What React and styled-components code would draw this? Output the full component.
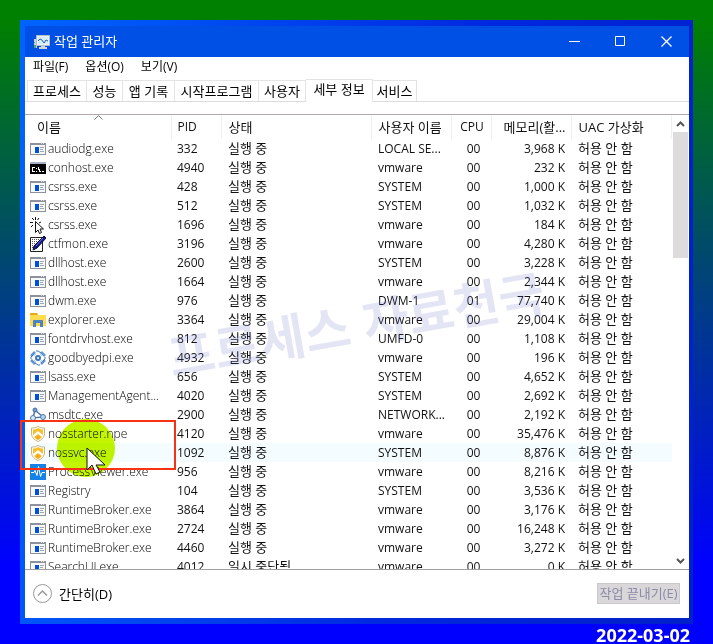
import React from "react";
import styled, { createGlobalStyle } from "styled-components";

const GlobalStyle = createGlobalStyle`
  * {
    box-sizing: border-box;
  }

  body {
    margin: 0;
    font-family: "Open Sans", "Noto Sans CJK KR", sans-serif;
    font-size: 12px;
    color: #000;
  }

  button,
  input {
    font: inherit;
  }
`;

const Page = styled.div`
  display: flex;
  flex-direction: column;
  height: 100vh;
  min-height: 320px;
  padding: 20px 20px 0;
  background: linear-gradient(#008000 3%, #0000ff 88%);
`;

const Desktop = styled.div`
  display: flex;
  flex: 1;
  min-height: 0;
  padding: 6px 4px 6px 5px;
  background: linear-gradient(100deg, #0064ff, #0028e0 60%, #0020c8);
`;

const Window = styled.main`
  display: flex;
  flex: 1;
  flex-direction: column;
  min-width: 0;
  background: #fff;
`;

const TitleBar = styled.header`
  display: flex;
  align-items: center;
  height: 31px;
  padding-left: 8px;
  background: #0050e6;
  color: #fff;
`;

const Title = styled.h1`
  flex: 1;
  margin: 0 0 0 4px;
  padding-bottom: 2px;
  font-size: 13px;
  font-weight: 400;
`;

const WindowButton = styled.button`
  display: grid;
  place-items: center;
  width: 46px;
  height: 31px;
  padding: 0;
  border: 0;
  background: none;
  color: #fff;
`;

const MenuBar = styled.nav`
  display: flex;
  gap: 17px;
  height: 20px;
  padding-left: 8px;
`;

const MenuButton = styled.button`
  padding: 0;
  border: 0;
  background: none;
  color: #000;
  line-height: 20px;
`;

const Tabs = styled.div`
  display: flex;
  align-items: flex-end;
  height: 25px;
  padding-left: 2px;
  border-bottom: 1px solid #dcdcdc;
`;

const Tab = styled.button`
  width: ${({ width }) => width}px;
  height: ${({ $selected }) => ($selected ? 23 : 21)}px;
  margin-bottom: ${({ $selected }) => ($selected ? -1 : 0)}px;
  padding: 0 0 ${({ $selected }) => ($selected ? 3 : 0)}px;
  border: 1px solid #e4e4e4;
  border-bottom: 0;
  border-left-width: ${({ $first }) => ($first ? 1 : 0)}px;
  background: #fff;
  color: #000;
  font-size: 13px;
  line-height: 19px;
  white-space: nowrap;
`;

const ListArea = styled.section`
  position: relative;
  display: flex;
  flex: 1;
  min-height: 0;
  margin-top: 12px;
  border-top: 1px solid #b4aaaa;
  border-bottom: 1px solid #a0a0a0;
`;

const TableClip = styled.div`
  flex: 1;
  min-width: 0;
  overflow: hidden;
`;

const Table = styled.table`
  width: 100%;
  table-layout: fixed;
  border-collapse: collapse;
  color: #111;
`;

const HeadCell = styled.th`
  height: 24px;
  padding: 0 5px 0 ${({ $indent }) => $indent || 7}px;
  border-right: 1px solid #f0f0f0;
  overflow: hidden;
  font-size: ${({ $korean }) => ($korean ? 13 : 12)}px;
  font-weight: 400;
  line-height: 24px;
  text-align: ${({ $align }) => $align || "left"};
  vertical-align: top;
  white-space: nowrap;
`;

const Row = styled.tr`
  height: 19px;
  background: ${({ $hovered }) => ($hovered ? "#f4fcff" : "none")};
`;

const Cell = styled.td`
  height: 19px;
  padding: 0 ${({ $align }) => ($align === "right" ? 6 : 2)}px 0 ${({ $indent }) => $indent || 7}px;
  overflow: hidden;
  font-size: ${({ $korean }) => ($korean ? 13 : 12)}px;
  line-height: 19px;
  text-align: ${({ $align }) => $align || "left"};
  white-space: nowrap;
`;

const NameBox = styled.div`
  display: flex;
  align-items: center;
  gap: 2px;
  height: 19px;
  color: #000;
  font-weight: 350;

  svg {
    flex-shrink: 0;
  }
`;

const SortMark = styled.svg`
  position: absolute;
  top: 0;
  left: 69px;
`;

const ScrollBar = styled.div`
  display: flex;
  flex-direction: column;
  align-items: center;
  width: 17px;
  padding: 0 1px;
`;

const ScrollButton = styled.button`
  display: grid;
  place-items: center;
  width: 15px;
  height: 17px;
  padding: 0;
  border: 0;
  background: none;
`;

const ScrollTrack = styled.div`
  flex: 1;
  width: 15px;
`;

const ScrollThumb = styled.div`
  height: 30%;
  background: #dedbdc;
`;

const Watermark = styled.div`
  position: absolute;
  top: 180px;
  left: 141px;
  color: #5a64c8;
  font-size: 50px;
  font-weight: 700;
  line-height: 60px;
  opacity: 0.16;
  pointer-events: none;
  transform: rotate(-10deg);
  white-space: nowrap;
`;

const Spot = styled.div`
  position: absolute;
  top: 304px;
  left: 32px;
  width: 58px;
  height: 58px;
  border-radius: 50%;
  background: #c3f500;
  mix-blend-mode: multiply;
  pointer-events: none;
`;

const RedBox = styled.div`
  position: absolute;
  top: 305px;
  left: -5px;
  width: 156px;
  height: 50px;
  border: 2px solid #fa3214;
  pointer-events: none;
`;

const Pointer = styled.svg`
  position: absolute;
  top: 332px;
  left: 61px;
  pointer-events: none;
`;

const Footer = styled.footer`
  display: flex;
  align-items: center;
  justify-content: space-between;
  height: 48px;
  padding: 0 9px 2px 8px;
`;

const FoldButton = styled.button`
  display: flex;
  align-items: center;
  gap: 7px;
  padding: 0;
  border: 0;
  background: none;
  color: #000;
  font-size: 13px;
`;

const EndButton = styled.button`
  width: 83px;
  height: 21px;
  padding: 0;
  border: 1px solid #c8c8cd;
  background: #d9d7da;
  color: #8c8ca5;
  font-size: 13px;
  line-height: 19px;
  white-space: nowrap;
`;

const DateText = styled.time`
  align-self: flex-end;
  height: 20px;
  margin-right: 3px;
  color: #fff;
  font-family: "Noto Sans", sans-serif;
  font-size: 18px;
  font-weight: 700;
  line-height: 22px;
`;

const TaskLogo = () => (
  <svg width="17" height="16" viewBox="0 0 17 16">
    <path d="M1 5h3v9H1z" fill="#c8d2d8" />
    <path d="M1 8h1v1H1zM1 11h2v3H1z" fill="#4aa860" />
    <path d="M3.500 1.500h13v10h-13z" fill="#e8f2f8" stroke="#b4c0c8" />
    <path d="M5 3h10v7H5z" fill="#d4ecfa" />
    <path d="M5 7l2-2 2 1 2 3 2-3 2 1" fill="none" stroke="#1e64aa" />
    <path d="M8 12h4v1h2v2H6v-2h2z" fill="#ccd6dc" />
  </svg>
);

const AppIcon = () => (
  <svg width="16" height="14" viewBox="0 0 16 14" shapeRendering="crispEdges">
    <path d="M0 1h16v12H0z" fill="#8c919b" />
    <path d="M1 3h14v9H1z" fill="#f6f8fa" />
    <path d="M11 1h1v1h-1zM13 1h1v1h-1z" fill="#dde" />
    <path d="M5 5h4v6H5z" fill="#0050dc" />
    <path d="M10 5h4v1h-4zM10 7h3v1h-3zM10 9h4v1h-4z" fill="#a0a5b0" />
  </svg>
);

const ConsoleIcon = () => (
  <svg width="16" height="14" viewBox="0 0 16 14" shapeRendering="crispEdges">
    <path d="M0 1h16v12H0z" fill="#000" />
    <path d="M0 1h16v2H0z" fill="#a5b0c8" />
    <path d="M2 6h3v1H3v3h2v1H2zM6 7h1v1H6zM6 10h1v1H6zM8 6h1v2h1v2h1v1H9V9H8zM12 10h2v1h-2z" fill="#fff" />
  </svg>
);

const ClickIcon = () => (
  <svg width="16" height="18" viewBox="0 0 16 18">
    <path d="M5.500 5.500v11l2.500-2.500 1.500 3.500 2-1-1.500-3.500h3.500z" fill="#fff" stroke="#111" />
    <path d="M5.500 1v3M2 2l2 2M0 6.500h3M1 11l2-2M9 2L7.500 4M11 6l-2 1" stroke="#111" fill="none" />
  </svg>
);

const PenIcon = () => (
  <svg width="16" height="16" viewBox="0 0 16 16">
    <path d="M.5 1.500h12v14H.5z" fill="#fff" stroke="#222" />
    <path d="M2 3.500h9M2 5.500h7M2 7.500h6M2 9.500h4M2 11.500h3" stroke="#555" strokeDasharray="1 1" />
    <path d="M14 0l2 2-9 10-4 2 1-4z" fill="#14148c" stroke="#0a0a32" />
    <path d="M13 2L6 10" stroke="#6478e6" />
  </svg>
);

const FolderIcon = () => (
  <svg width="16" height="16" viewBox="0 0 16 16">
    <path d="M0 1h7l1 2h8v11H0z" fill="#fcdc50" />
    <path d="M0 1h7l1 2H0z" fill="#e6aa14" />
    <path d="M3 15V9q0-1 1-1h8q1 0 1 1v6h-3v-4H6v4z" fill="#4b82c8" />
  </svg>
);

const GearIcon = () => (
  <svg width="16" height="16" viewBox="0 0 16 16" fill="none">
    <circle cx="8" cy="8" r="2" stroke="#3c78be" strokeWidth="2" />
    <path d="M1 6l4-4M11 2l4 4M15 10l-4 4M5 14L1 10" stroke="#5f96d2" strokeWidth="2.500" />
    <path d="M6 1l2-0 3 2M15 7v2l-2 2M10 15H8l-3-2M1 9V7l2-2" stroke="#3c78be" />
    <path d="M6 4L4 6M10 4l2 2M12 10l-2 2M4 10l2 2" stroke="#b9d2ee" />
  </svg>
);

const NodesIcon = () => (
  <svg width="16" height="16" viewBox="0 0 16 16">
    <path d="M5 3L3 11l10-1zM5 3l8 7" fill="none" stroke="#5078a8" strokeWidth="1.500" />
    <circle cx="5" cy="3" r="2" fill="#6ea0dc" stroke="#466ea0" />
    <circle cx="3" cy="11" r="2.500" fill="#dce8fa" stroke="#5078aa" />
    <circle cx="13" cy="10" r="2.500" fill="#b4d2f5" stroke="#5078aa" />
  </svg>
);

const ShieldIcon = () => (
  <svg width="16" height="16" viewBox="0 0 16 16">
    <path d="M8 .5q3 2 6.500 1.500v6q-.5 5-6.500 7.500Q2 13 1.500 8V2Q5 2.500 8 .5z" fill="#fff" stroke="#c8b482" />
    <path d="M8 2q2 1.500 5 1.500V8q-.5 4-5 6-4.500-2-5-6V3.500Q6 3.500 8 2z" fill="#fabe28" />
    <path d="M3 9l5-4 5 4-1 2-4-3-4 3z" fill="#fff" />
    <path d="M5 11l3-2 3 2-3 3z" fill="#f5aa1e" />
  </svg>
);

const PulseIcon = () => (
  <svg width="16" height="16" viewBox="0 0 16 16">
    <path d="M0 0h16v16H0z" fill="#1482e6" />
    <path d="M1 8.500h3l1-2 2 5 1.500-9 2 10 1.500-4h3" fill="none" stroke="#fff" />
  </svg>
);

const icons = {
  app: AppIcon,
  console: ConsoleIcon,
  click: ClickIcon,
  pen: PenIcon,
  folder: FolderIcon,
  gear: GearIcon,
  nodes: NodesIcon,
  shield: ShieldIcon,
  pulse: PulseIcon,
};

const menus = ["파일(F)", "옵션(O)", "보기(V)"];

const tabs = [
  { label: "프로세스", width: 60 },
  { label: "성능", width: 36 },
  { label: "앱 기록", width: 52 },
  { label: "시작프로그램", width: 84 },
  { label: "사용자", width: 47 },
  { label: "세부 정보", width: 67, selected: true },
  { label: "서비스", width: 44 },
];

const processes = [
  ["app", "audiodg.exe", 332, "LOCAL SE...", "00", "3,968"],
  ["console", "conhost.exe", 4940, "vmware", "00", "232"],
  ["app", "csrss.exe", 428, "SYSTEM", "00", "1,000"],
  ["app", "csrss.exe", 512, "SYSTEM", "00", "1,032"],
  ["click", "csrss.exe", 1696, "vmware", "00", "184"],
  ["pen", "ctfmon.exe", 3196, "vmware", "00", "4,280"],
  ["app", "dllhost.exe", 2600, "SYSTEM", "00", "3,228"],
  ["app", "dllhost.exe", 1664, "vmware", "00", "2,344"],
  ["app", "dwm.exe", 976, "DWM-1", "01", "77,740"],
  ["folder", "explorer.exe", 3364, "vmware", "00", "29,004"],
  ["app", "fontdrvhost.exe", 812, "UMFD-0", "00", "1,108"],
  ["gear", "goodbyedpi.exe", 4932, "vmware", "00", "196"],
  ["app", "lsass.exe", 656, "SYSTEM", "00", "4,652"],
  ["app", "ManagementAgent...", 4020, "SYSTEM", "00", "2,692"],
  ["nodes", "msdtc.exe", 2900, "NETWORK...", "00", "2,192"],
  ["shield", "nosstarter.npe", 4120, "vmware", "00", "35,476"],
  ["shield", "nossvc.exe", 1092, "SYSTEM", "00", "8,876"],
  ["pulse", "ProcessViewer.exe", 956, "vmware", "00", "8,216"],
  ["app", "Registry", 104, "SYSTEM", "00", "3,536"],
  ["app", "RuntimeBroker.exe", 3864, "vmware", "00", "3,176"],
  ["app", "RuntimeBroker.exe", 2724, "vmware", "00", "16,248"],
  ["app", "RuntimeBroker.exe", 4460, "vmware", "00", "3,272"],
  ["app", "SearchUI.exe", 4012, "vmware", "00", "0"],
];

function ProcessRow({ process }) {
  const [icon, name, pid, user, cpu, memory] = process;
  const Icon = icons[icon];

  return (
    <Row $hovered={name === "nossvc.exe"}>
      <Cell $indent={5}>
        <NameBox>
          <Icon />
          {name}
        </NameBox>
      </Cell>
      <Cell $indent={6}>{pid}</Cell>
      <Cell $korean>{name === "SearchUI.exe" ? "일시 중단됨" : "실행 중"}</Cell>
      <Cell>{user}</Cell>
      <Cell $align="center">{cpu}</Cell>
      <Cell $align="right">{memory} K</Cell>
      <Cell $korean>허용 안 함</Cell>
    </Row>
  );
}

export default function App() {
  return (
    <>
      <GlobalStyle />
      <Page>
        <Desktop>
          <Window>
            <TitleBar>
              <TaskLogo />
              <Title>작업 관리자</Title>
              <WindowButton aria-label="최소화">
                <svg width="11" height="11" stroke="currentColor">
                  <path d="M0 5.500h11" />
                </svg>
              </WindowButton>
              <WindowButton aria-label="최대화">
                <svg width="11" height="11" fill="none" stroke="currentColor">
                  <path d="M.5 .5h9v9H.5z" />
                </svg>
              </WindowButton>
              <WindowButton aria-label="닫기">
                <svg width="11" height="11" stroke="currentColor" strokeWidth="1.300">
                  <path d="M.5 .5l10 10M10.500 .5l-10 10" />
                </svg>
              </WindowButton>
            </TitleBar>
            <MenuBar>
              {menus.map((menu) => (
                <MenuButton key={menu}>{menu}</MenuButton>
              ))}
            </MenuBar>
            <Tabs role="tablist">
              {tabs.map(({ label, width, selected }, i) => (
                <Tab
                  key={label}
                  role="tab"
                  aria-selected={!!selected}
                  width={width}
                  $first={i === 0}
                  $selected={selected}
                >
                  {label}
                </Tab>
              ))}
            </Tabs>
            <ListArea>
              <TableClip>
                <Table>
                  <colgroup>
                    <col width="146" />
                    <col width="50" />
                    <col width="150" />
                    <col width="80" />
                    <col width="40" />
                    <col width="80" />
                    <col />
                  </colgroup>
                  <thead>
                    <tr>
                      <HeadCell $korean $indent={12}>이름</HeadCell>
                      <HeadCell $indent={6}>PID</HeadCell>
                      <HeadCell $korean>상태</HeadCell>
                      <HeadCell $korean>사용자 이름</HeadCell>
                      <HeadCell $align="center">CPU</HeadCell>
                      <HeadCell $korean $align="right">메모리(활...</HeadCell>
                      <HeadCell $korean>UAC 가상화</HeadCell>
                    </tr>
                  </thead>
                  <tbody>
                    {processes.map((process) => (
                      <ProcessRow key={process[2]} process={process} />
                    ))}
                  </tbody>
                </Table>
              </TableClip>
              <ScrollBar>
                <ScrollButton aria-label="위로">
                  <svg width="9" height="6" fill="none" stroke="#555" strokeWidth="2">
                    <path d="M1 5l3.500-3.500L8 5" />
                  </svg>
                </ScrollButton>
                <ScrollTrack>
                  <ScrollThumb />
                </ScrollTrack>
                <ScrollButton aria-label="아래로">
                  <svg width="9" height="6" fill="none" stroke="#555" strokeWidth="2">
                    <path d="M1 1l3.500 3.500L8 1" />
                  </svg>
                </ScrollButton>
              </ScrollBar>
              <SortMark width="9" height="5" fill="none" stroke="#777">
                <path d="M.5 4.500l4-4 4 4" />
              </SortMark>
              <Watermark>프로세스 자료천국</Watermark>
              <Spot />
              <RedBox />
              <Pointer width="20" height="28" viewBox="0 0 20 28">
                <path
                  d="M1 1v22l5-5 4 9 4-2-4-7h9z"
                  fill="#fff"
                  stroke="#111"
                />
              </Pointer>
            </ListArea>
            <Footer>
              <FoldButton>
                <svg width="19" height="19" fill="none" stroke="#999">
                  <circle cx="9.500" cy="9.500" r="9" />
                  <path d="M5 11.500L9.500 7l4.500 4.500" strokeWidth="1.500" />
                </svg>
                간단히(D)
              </FoldButton>
              <EndButton disabled>작업 끝내기(E)</EndButton>
            </Footer>
          </Window>
        </Desktop>
        <DateText dateTime="2022-03-02">2022-03-02</DateText>
      </Page>
    </>
  );
}
